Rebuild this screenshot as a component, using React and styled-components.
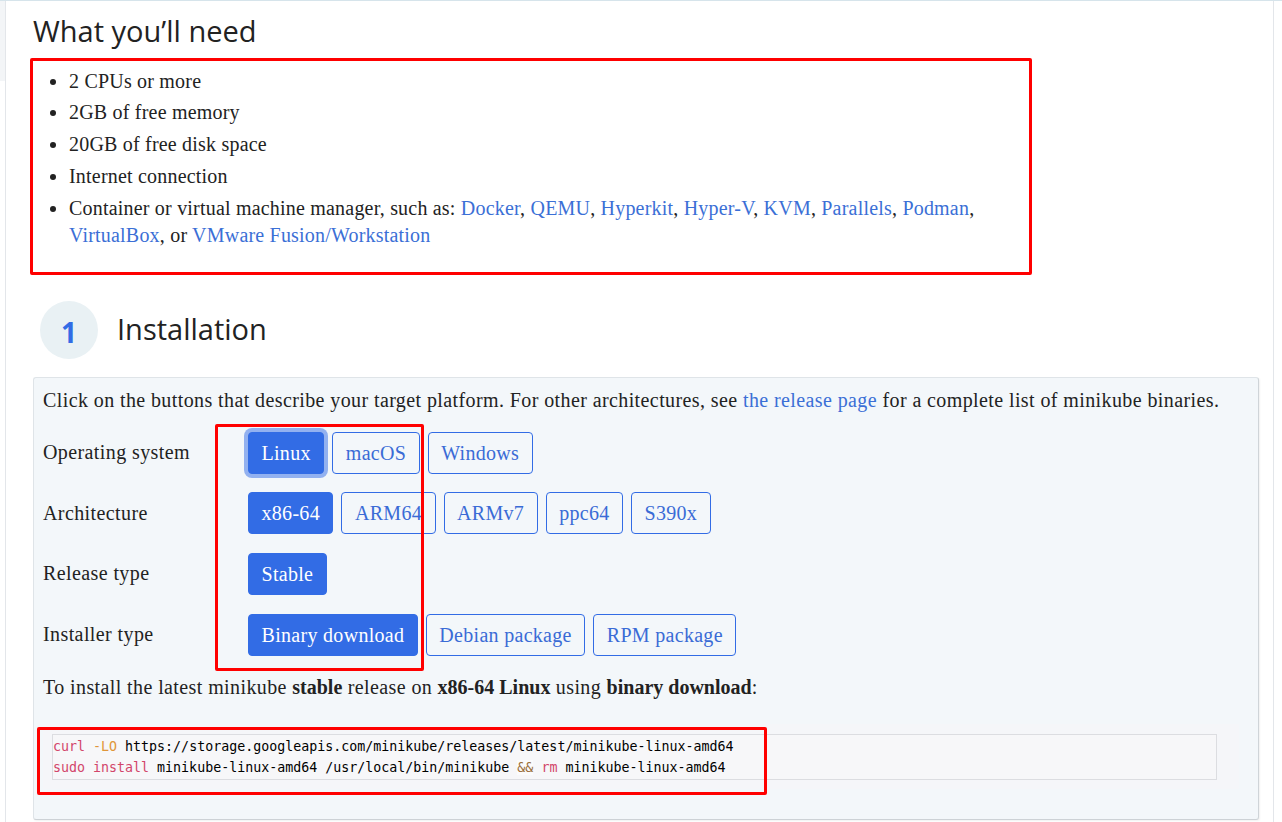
import React from 'react';
import styled, { createGlobalStyle } from 'styled-components';

const GlobalStyle = createGlobalStyle`
  html, body { margin: 0; padding: 0; background: #fff; }
  body {
    font-family: "Liberation Serif", "Times New Roman", serif;
    color: #222;
    letter-spacing: 0.4px;
    -webkit-font-smoothing: antialiased;
  }
`;

const Frame = styled.div`
  position: relative;
  display: flex;
  width: 1282px;
  min-height: 822px;
  border-top: 1px solid #d6e4eb;
  box-sizing: border-box;
  overflow: hidden;
`;

const SideStrip = styled.div`
  flex: none;
  width: 5px;
  border-right: 1px solid #e3e6ea;
  background: linear-gradient(#f3f5f7 0, #f3f5f7 80px, #fff 80px);
`;

const Main = styled.main`
  flex: none;
  width: 1268px;
  box-sizing: border-box;
  padding: 0 14px 0 27px;
  border-right: 1px solid #e3e6ea;
`;

const SectionTitle = styled.h2`
  margin: 13px 0 0;
  font-family: "Open Sans", "DejaVu Sans", sans-serif;
  font-weight: 400;
  font-size: 29px;
  line-height: 1.2;
  letter-spacing: 0;
  color: #222;
`;

const NeedList = styled.ul`
  margin: 19px 0 0;
  padding-left: 36px;
  max-width: 1000px;
  box-sizing: border-box;
  font-size: 20px;
  line-height: 27px;
  letter-spacing: 0.2px;
`;

const NeedItem = styled.li`
  margin-bottom: 4.7px;
  &:last-child { margin-bottom: 0; }
`;

const Link = styled.a`
  color: #3b6fd6;
  text-decoration: none;
`;

const StepHeader = styled.div`
  display: flex;
  align-items: center;
  gap: 19px;
  margin: 52px 0 0 7px;
`;

const StepBadge = styled.div`
  width: 58px;
  height: 58px;
  border-radius: 50%;
  background: #e9f1f4;
  display: flex;
  align-items: center;
  justify-content: center;
  font-family: "Open Sans", "DejaVu Sans", sans-serif;
  font-weight: 700;
  font-size: 28px;
  letter-spacing: 0;
  color: #326ce5;
  padding-top: 4px;
  box-sizing: border-box;
`;

const StepTitle = styled.h2`
  margin: 0;
  font-family: "Open Sans", "DejaVu Sans", sans-serif;
  font-weight: 400;
  font-size: 29px;
  line-height: 1.2;
  letter-spacing: 0;
  color: #222;
`;

const Panel = styled.section`
  margin-top: 18px;
  background: #f3f7fa;
  border: 1px solid #dfe4e8;
  border-right-color: #cfd4d8;
  border-bottom-color: #cdd2d6;
  border-radius: 3px;
  padding: 9px 9px 30px;
  box-shadow: 1px 1px 2px rgba(0, 0, 0, 0.06);
  font-size: 20px;
  line-height: 27px;
`;

const Para = styled.p`
  margin: 0;
  white-space: nowrap;
`;

const OptionRows = styled.div`
  display: flex;
  flex-direction: column;
  gap: 18.7px;
  margin-top: 18px;
`;

const OptionRow = styled.div`
  display: flex;
  align-items: center;
  gap: 8px;
`;

const OptionLabel = styled.div`
  flex: none;
  width: 197px;
`;

const OptionButton = styled.button`
  height: 42px;
  padding: 0 12.5px;
  box-sizing: border-box;
  font-family: inherit;
  font-size: 20px;
  letter-spacing: 0.3px;
  line-height: 1;
  border-radius: 4px;
  border: 1px solid #326ce5;
  background: ${(p) => (p.$active ? '#326ce5' : 'transparent')};
  color: ${(p) => (p.$active ? '#fff' : '#3a6bd6')};
  box-shadow: ${(p) => (p.$focused ? '0 0 0 4px rgba(50, 108, 229, 0.5)' : 'none')};
  cursor: pointer;
`;

const Summary = styled.p`
  margin: 18px 0 0;
  & b { letter-spacing: 0; }
`;

const CodeShell = styled.div`
  margin: 23px 10px 0 0;
  padding: 10px 22px 9px 9px;
  background: #f5f6f9;
`;

const CodeBox = styled.pre`
  margin: 0;
  padding: 1px 1px 1px 0;
  border: 1px solid #dcdde1;
  background: #f7f7f9;
  font-family: "DejaVu Sans Mono", "Liberation Mono", monospace;
  font-size: 13.3px;
  line-height: 21px;
  letter-spacing: 0;
  color: #000;
`;

const Fn = styled.span`
  color: #d2456a;
`;

const Param = styled.span`
  color: #e0963a;
`;

const Op = styled.span`
  color: #9a6e3a;
  background: rgba(255, 255, 255, 0.5);
`;

const Callout = styled.div`
  position: absolute;
  left: ${(p) => p.$x}px;
  top: ${(p) => p.$y}px;
  width: ${(p) => p.$w}px;
  height: ${(p) => p.$h}px;
  box-sizing: border-box;
  border: 3.5px solid #ff0000;
  border-radius: 2px;
  pointer-events: none;
`;

const rows = [
  { label: 'Operating system', options: ['Linux', 'macOS', 'Windows'], active: 0, focused: true },
  { label: 'Architecture', options: ['x86-64', 'ARM64', 'ARMv7', 'ppc64', 'S390x'], active: 0 },
  { label: 'Release type', options: ['Stable'], active: 0 },
  { label: 'Installer type', options: ['Binary download', 'Debian package', 'RPM package'], active: 0 },
];

const managers = ['Docker', 'QEMU', 'Hyperkit', 'Hyper-V', 'KVM', 'Parallels', 'Podman'];

export default function App() {
  return (
    <>
      <GlobalStyle />
      <Frame>
        <SideStrip />
        <Main>
          <SectionTitle>What you’ll need</SectionTitle>
          <NeedList>
            <NeedItem>2 CPUs or more</NeedItem>
            <NeedItem>2GB of free memory</NeedItem>
            <NeedItem>20GB of free disk space</NeedItem>
            <NeedItem>Internet connection</NeedItem>
            <NeedItem>
              Container or virtual machine manager, such as:{' '}
              {managers.map((m) => (
                <React.Fragment key={m}>
                  <Link href="#">{m}</Link>,{' '}
                </React.Fragment>
              ))}
              <Link href="#">VirtualBox</Link>, or <Link href="#">VMware Fusion/Workstation</Link>
            </NeedItem>
          </NeedList>

          <StepHeader>
            <StepBadge>1</StepBadge>
            <StepTitle>Installation</StepTitle>
          </StepHeader>

          <Panel>
            <Para>
              Click on the buttons that describe your target platform. For other architectures, see{' '}
              <Link href="#">the release page</Link> for a complete list of minikube binaries.
            </Para>
            <OptionRows>
              {rows.map((r) => (
                <OptionRow key={r.label}>
                  <OptionLabel>{r.label}</OptionLabel>
                  {r.options.map((o, i) => (
                    <OptionButton key={o} $active={i === r.active} $focused={r.focused && i === r.active}>
                      {o}
                    </OptionButton>
                  ))}
                </OptionRow>
              ))}
            </OptionRows>
            <Summary>
              To install the latest minikube <b>stable</b> release on <b>x86-64 Linux</b> using{' '}
              <b>binary download</b>:
            </Summary>
            <CodeShell>
              <CodeBox>
                <Fn>curl</Fn> <Param>-LO</Param> https://storage.googleapis.com/minikube/releases/latest/minikube-linux-amd64
                {'\n'}
                <Fn>sudo</Fn> <Fn>install</Fn> minikube-linux-amd64 /usr/local/bin/minikube <Op>&amp;&amp;</Op>{' '}
                <Fn>rm</Fn> minikube-linux-amd64
              </CodeBox>
            </CodeShell>
          </Panel>
        </Main>
        <Callout $x={30} $y={57} $w={1002} $h={217} />
        <Callout $x={215} $y={423} $w={209} $h={247} />
        <Callout $x={37} $y={726} $w={730} $h={68} />
      </Frame>
    </>
  );
}
